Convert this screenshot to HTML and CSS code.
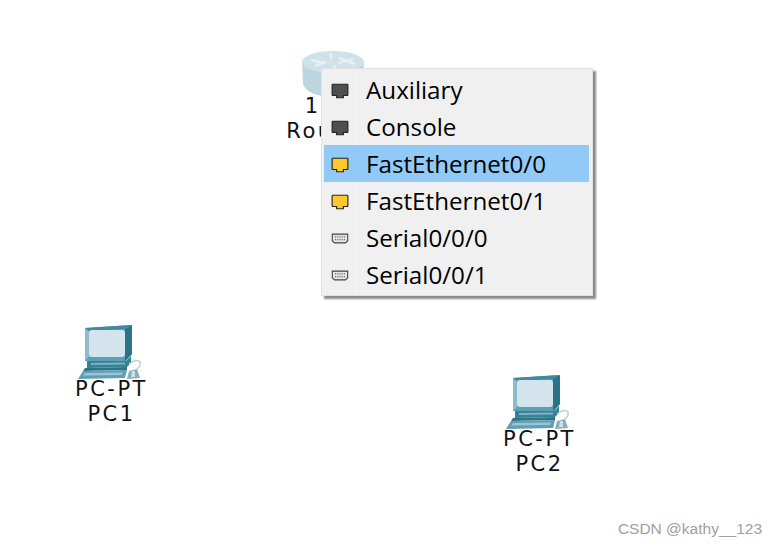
FILE: index.html
```html
<!DOCTYPE html>
<html>
<head>
  <title>Topology</title>
  <link rel="stylesheet" href="styles.css">
</head>
<body>
  <svg class="defs" width="0" height="0">
    <symbol id="pc" viewBox="0 0 66 56">
      <path d="M8 4 L55 1 L55 30 L49 37 L8 37 Z" fill="#5b9fb2"/>
      <path d="M48 5 L55 1 L55 30 L48 37 Z" fill="#2a7488"/>
      <path d="M8 4 L12 7 L12 33 L8 37 Z" fill="#8dbdcc"/>
      <path d="M8 4 L55 1 L48 5 L12 7 Z" fill="#3f8a9e"/>
      <rect x="12" y="6" width="36" height="27" rx="3" fill="#d3e4ec"/>
      <path d="M10 37 L49 37 L54 32 L54 39 L50 43 L10 44 Z" fill="#358297"/>
      <path d="M14 39 L48 38.500 L48 40.500 L14 41 Z" fill="#7fb3c4"/>
      <path d="M8 44 L50 43 L50 46 L6 47 Z" fill="#2a7488"/>
      <path d="M6 47 L50 46 L48 54 L1 55 Z" fill="#5f9fb3"/>
      <path d="M8 49 L46 48.500 L45 51 L6 51.500 Z" fill="#9cc5d2"/>
      <path d="M52 40 Q60 34 63 38 Q64 42 60 45" fill="none" stroke="#b9cfd6" stroke-width="1.500"/>
      <path d="M52 47 L60 45 L63 54 L50 55 Z" fill="#86aebb"/>
      <path d="M55 47 L58 47 L58 53 L54 53 Z" fill="#cfdfe4"/>
    </symbol>
    <symbol id="rj45" viewBox="0 0 16 14">
      <path d="M1 1.500 Q1 1 1.500 1 L14.500 1 Q15 1 15 1.500 L15 10.500 Q15 11 14.500 11 L11 11 L11 13 L5 13 L5 11 L1.500 11 Q1 11 1 10.500 Z" fill="currentColor" stroke="#222" stroke-width="1"/>
    </symbol>
    <symbol id="serial" viewBox="0 0 16 10">
      <path d="M1 1 L15 1 L15 7 L13 9 L3 9 L1 7 Z" fill="#e6e6e6" stroke="#444" stroke-width="1"/>
      <path d="M3.500 3.500 H13 M3.500 6 H13" stroke="#666" stroke-width="1" stroke-dasharray="1 1"/>
    </symbol>
  </svg>

  <div class="canvas">
    <div class="node router-node">
      <svg class="router-icon" width="64" height="56" viewBox="0 0 64 56">
        <path d="M1 12 L2 34 Q6 46 32 47 Q58 46 62 34 L63 12 Z" fill="#bcd6df"/>
        <ellipse cx="32" cy="12" rx="31" ry="11" fill="#cfe2e9"/>
        <path d="M10 10 L24 13 M14 16 L25 12 M37 13 L52 9 M38 8 L54 14 M29 3 L31 9 M33 15 L34 21" stroke="#e6f0f3" stroke-width="2.500" fill="none"/>
      </svg>
      <div class="node-label">1841</div>
      <div class="node-label">Router0</div>
    </div>

    <div class="node pc1-node">
      <svg class="pc-icon" width="66" height="56"><use href="#pc"/></svg>
      <div class="node-label">PC-PT</div>
      <div class="node-label">PC1</div>
    </div>

    <div class="node pc2-node">
      <svg class="pc-icon" width="66" height="56"><use href="#pc"/></svg>
      <div class="node-label">PC-PT</div>
      <div class="node-label">PC2</div>
    </div>

    <ul class="port-menu">
      <li class="port-item"><span class="port-gutter"><svg class="rj45 console" width="18" height="16"><use href="#rj45"/></svg></span>Auxiliary</li>
      <li class="port-item"><span class="port-gutter"><svg class="rj45 console" width="18" height="16"><use href="#rj45"/></svg></span>Console</li>
      <li class="port-item selected"><span class="port-gutter"><svg class="rj45 fast" width="18" height="16"><use href="#rj45"/></svg></span>FastEthernet0/0</li>
      <li class="port-item"><span class="port-gutter"><svg class="rj45 fast" width="18" height="16"><use href="#rj45"/></svg></span>FastEthernet0/1</li>
      <li class="port-item"><span class="port-gutter"><svg width="18" height="11"><use href="#serial"/></svg></span>Serial0/0/0</li>
      <li class="port-item"><span class="port-gutter"><svg width="18" height="11"><use href="#serial"/></svg></span>Serial0/0/1</li>
    </ul>

    <div class="watermark">CSDN @kathy__123</div>
  </div>
</body>
</html>
```

FILE: styles.css
```css
body {
  margin: 0;
  padding: 0;
  background: #fff;
  font-family: "Open Sans", "Noto Sans", sans-serif;
}
.defs {
  position: absolute;
}
.canvas {
  position: relative;
  width: 776px;
  height: 546px;
  overflow: hidden;
}
.node {
  position: absolute;
  width: 100px;
  display: flex;
  flex-direction: column;
  align-items: center;
}
.router-node {
  left: 285px;
  top: 50px;
}
.router-icon {
  margin-left: -4px;
  margin-bottom: -12px;
}
.pc1-node {
  left: 60px;
  top: 324px;
}
.pc2-node {
  left: 488px;
  top: 374px;
}
.pc-icon {
  display: block;
  margin-bottom: -3px;
}
.node-label {
  font-family: "DejaVu Sans", sans-serif;
  font-size: 21px;
  line-height: 25px;
  color: #111;
  letter-spacing: 2.5px;
  padding-left: 3px;
}
.port-menu {
  position: absolute;
  left: 321px;
  top: 68px;
  width: 265px;
  margin: 0;
  padding: 2px 3px 2px 2px;
  list-style: none;
  background: #f0f0f0;
  border: 1px solid #e2e2e2;
  box-shadow: 3px 3px 2px #888;
}
.port-item {
  display: flex;
  align-items: center;
  height: 37px;
  font-size: 24.2px;
  color: #000;
}
.port-item.selected {
  background: #91c9f7;
}
.port-gutter {
  flex: none;
  width: 33px;
  margin-right: 9px;
  padding-left: 7px;
  box-sizing: border-box;
  height: 100%;
  display: flex;
  align-items: center;
  border-right: 1px solid #f6f6f6;
}
.port-gutter svg {
  margin-top: 2px;
}
.selected .port-gutter {
  border-right-color: #91c9f7;
}
.rj45.console {
  color: #4f4f4f;
}
.rj45.fast {
  color: #fdc92b;
}
.watermark {
  position: absolute;
  right: 14px;
  top: 519px;
  font-family: "Liberation Sans", sans-serif;
  font-size: 15.5px;
  line-height: 20px;
  color: #a0a0a0;
}
```
